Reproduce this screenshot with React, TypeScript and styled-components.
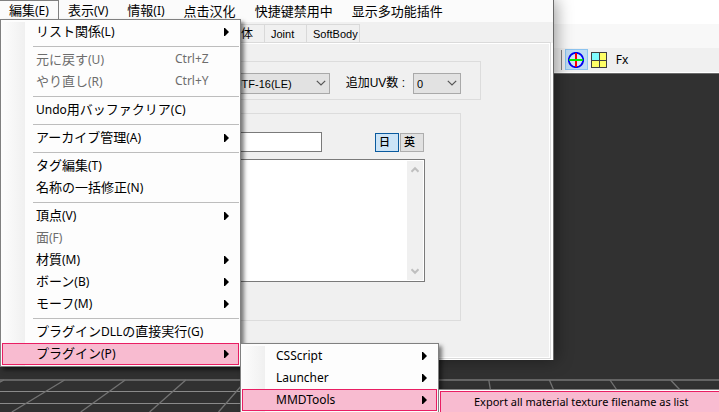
import React from "react";
import styled, { createGlobalStyle, css } from "styled-components";

const GlobalStyle = createGlobalStyle`
  * { box-sizing: border-box; }
  body {
    margin: 0;
    overflow: hidden;
    color: #000;
    font-family: "Noto Sans CJK JP", sans-serif;
    font-size: 13px;
    line-height: 20px;
  }
  button, select, input, textarea { font: inherit; color: inherit; margin: 0; }
  ul { list-style: none; margin: 0; padding: 0; }
`;

const Desktop = styled.div`
  position: relative;
  display: flex;
  flex-direction: column;
  height: 100vh;
  overflow: hidden;
  background: #313131;
`;

/* ---------- viewer window ---------- */

const ViewerTitle = styled.div`
  height: 24px;
  background: #fff;
`;

const ViewerMenu = styled.div`
  height: 24px;
  background: #f8f8f8;
`;

const ViewerTools = styled.div`
  display: flex;
  align-items: flex-start;
  height: 26px;
  padding: 1px 0 0 561px;
  background: #f0f0f0;
  border-bottom: 1px solid #6b6b6b;
  box-shadow: inset 0 -1px #fff;
`;

const ToolDivider = styled.span`
  width: 1px;
  height: 20px;
  margin: 1px 3px 0 0;
  background: #828282;
`;

const ToolButton = styled.button<{ $active?: boolean }>`
  display: flex;
  align-items: center;
  justify-content: center;
  width: 23px;
  height: 21px;
  padding: 0 1px 0 0;
  border: 1px solid ${(p) => (p.$active ? "#8cc3ef" : "transparent")};
  background: ${(p) => (p.$active ? "#bfdcf3" : "transparent")};
  font: 12px/20px "Noto Sans", sans-serif;
`;

const Viewport = styled.div`
  display: flex;
  flex: 1;
  flex-direction: column;
  justify-content: flex-end;
`;

const FloorSvg = styled.svg`
  display: block;
  width: 100%;
  height: 33px;
`;

/* ---------- editor window ---------- */

const Editor = styled.div`
  position: absolute;
  top: 0;
  left: 0;
  display: flex;
  flex-direction: column;
  width: 554px;
  height: 360px;
  background: #f0f0f0;
  border-right: 1px solid #6a6a6a;
  box-shadow: 2px 0 16px rgba(0, 0, 0, 0.4);
`;

const MenuBar = styled.nav`
  display: flex;
  height: 22px;
  background: #fbfbfb;
`;

const MenuTitle = styled.button<{ $open?: boolean }>`
  height: 20px;
  padding: 0 9px;
  border: 1px solid ${(p) => (p.$open ? "#808080" : "transparent")};
  border-left: 0;
  border-bottom: 0;
  background: none;
  line-height: 16px;
  white-space: nowrap;
`;

const TabStrip = styled.div`
  display: flex;
  justify-content: flex-end;
  width: 360px;
  margin-top: 2px;
`;

const formFont = css`
  font-family: "Liberation Sans", "Noto Sans CJK JP", sans-serif;
  font-size: 11px;
`;

const Tab = styled.button<{ $width: number }>`
  ${formFont}
  width: ${(p) => p.$width}px;
  height: 18px;
  padding: 0 0 0 6px;
  border: 1px solid #d9d9d9;
  border-bottom: 0;
  border-left: 0;
  background: #f0f0f0;
  line-height: 18px;
  text-align: left;
  white-space: nowrap;
`;

const KanjiTab = styled(Tab)`
  padding: 0 11px 0 0;
  font-size: 12px;
  text-align: right;
`;

const Panel = styled.form`
  flex: 1;
  margin: 0 2px 1px;
  padding: 18px 0 0 8px;
  border: 1px solid #dadada;
  box-shadow: inset -1px -1px #fff, inset 0 1px #fff, 2px 1px #fff;
`;

const SettingsGroup = styled.div`
  display: flex;
  align-items: center;
  justify-content: flex-end;
  width: 470px;
  height: 39px;
  padding: 5px 19px 0 0;
  border: 1px solid #dcdcdc;
`;

const FieldLabel = styled.label`
  ${formFont}
  margin: 0 8px 0 16px;
  font-size: 12px;
  white-space: nowrap;
`;

const ComboBox = styled.div<{ $wide?: boolean }>`
  ${formFont}
  display: grid;
  align-items: center;
  width: ${(p) => (p.$wide ? 100 : 48)}px;
  height: 21px;
  border: 1px solid #a9a9a9;
  background: #e2e2e2;

  > * { grid-area: 1 / 1; }
  > svg { justify-self: end; margin-right: 3px; pointer-events: none; }
`;

const Select = styled.select`
  width: 100%;
  height: 19px;
  padding: 0 0 0 3px;
  border: 0;
  background: none;
  appearance: none;
`;

const ModelGroup = styled.div`
  width: 450px;
  height: 208px;
  margin-top: 13px;
  padding: 18px 35px 0 12px;
  border: 1px solid #dcdcdc;
`;

const NameRow = styled.div`
  display: flex;
  align-items: flex-end;
  margin-bottom: 7px;
`;

const NameInput = styled.input`
  flex: 1;
  height: 20px;
  min-width: 0;
  margin-right: 53px;
  padding: 0 3px;
  border: 1px solid #7a7a7a;
  background: #fff;
`;

const LangButton = styled.button<{ $active?: boolean }>`
  width: 24px;
  height: 19px;
  margin-right: 1px;
  padding: 0 5px 2px 0;
  border: 1px solid ${(p) => (p.$active ? "#0a5a9e" : "#adadad")};
  background: ${(p) => (p.$active ? "#cce4f7" : "#e1e1e1")};
  font-size: 11px;
  font-weight: 500;
  line-height: 15px;
`;

const CommentBox = styled.div`
  display: flex;
  height: 123px;
  padding: 1px;
  border: 1px solid #7a7a7a;
  background: #fff;
`;

const CommentText = styled.textarea`
  flex: 1;
  min-width: 0;
  padding: 2px;
  border: 0;
  outline: 0;
  resize: none;
  background: #fff;
`;

const ScrollTrack = styled.div`
  display: flex;
  flex-direction: column;
  justify-content: space-between;
  width: 16px;
  background: #f0f0f0;
`;

const ScrollButton = styled.button`
  display: flex;
  align-items: center;
  justify-content: center;
  height: 17px;
  padding: 0;
  border: 0;
  background: none;
`;

/* ---------- drop-down menus ---------- */

const MenuPopup = styled.ul<{ $level: number }>`
  position: absolute;
  z-index: ${(p) => p.$level};
  top: ${(p) => (p.$level === 1 ? "19px" : "0")};
  left: ${(p) => (p.$level === 1 ? "0" : "calc(100% + 1px)")};
  width: ${(p) => [0, 241, 199, 300][p.$level]}px;
  padding: 1px;
  border: 1px solid #808080;
  background: linear-gradient(90deg, #fdfdfd, #f0f0f0) 0 2px / 24px 100% no-repeat #fdfdfd;
  box-shadow: 3px 3px 4px rgba(0, 0, 0, 0.5);
`;

const MenuRow = styled.li`
  position: relative;
`;

const MenuSeparator = styled.li`
  height: 6px;
  margin-left: 31px;
  background: linear-gradient(#bdbdbd, #bdbdbd) 0 3px / 100% 1px no-repeat;
`;

const MenuButton = styled.button<{ $selected?: boolean }>`
  display: flex;
  align-items: center;
  width: 100%;
  height: 22px;
  padding: 0 10px 0 34px;
  border: 0;
  background: none;
  text-align: left;
  white-space: nowrap;

  &:disabled { color: #6d6d6d; }

  ${(p) =>
    p.$selected &&
    css`
      background: #f8bbd0;
      box-shadow: inset 0 0 0 1px #e91e63;
    `}
`;

const Latin = styled.span<{ $small?: boolean }>`
  font-family: "Noto Sans", sans-serif;
  font-size: ${(p) => (p.$small ? 11 : 12)}px;
`;

const Caption = styled.span`
  flex: 1;
  padding-bottom: 2px;
`;

const Shortcut = styled(Latin)`
  width: 54px;
  padding-bottom: 2px;
`;

/* Latin runs are set in their own face, one size below the kanji and kana. */
const Mixed = ({ text, small }: { text: string; small?: boolean }) => (
  <>
    {text.split(/([\x20-\x7e]+)/).map((part, i) =>
      i % 2 ? (
        <Latin key={i} $small={small}>
          {part}
        </Latin>
      ) : (
        part
      )
    )}
  </>
);

const Arrow = () => (
  <svg width="5" height="8" viewBox="0 0 5 8" aria-hidden="true">
    <path d="M0 0H1L5 4L1 8H0Z" fill="#000" />
  </svg>
);

const Chevron = () => (
  <svg width="10" height="6" viewBox="0 0 10 6" fill="none" stroke="#555" aria-hidden="true">
    <path d="M.8 .8L5 5L9.2 .8" strokeWidth="1.2" />
  </svg>
);

const ScrollArrow = ({ down }: { down?: boolean }) => (
  <svg width="8" height="7" viewBox="0 0 8 7" fill="none" stroke="#bfbfbf" strokeWidth="2" aria-hidden="true">
    <path d={down ? "M.5 1.3L4 4.8L7.5 1.3" : "M.5 5.7L4 2.2L7.5 5.7"} />
  </svg>
);

const AxisIcon = () => (
  <svg width="16" height="16" viewBox="0 0 16 16" fill="none" aria-hidden="true">
    <circle cx="8" cy="8" r="7.2" fill="#cfe6fb" stroke="#0000f0" strokeWidth="1.8" />
    <path d="M8 1v14" stroke="#f00" strokeWidth="2" />
    <path d="M1 8h14" stroke="#00f000" strokeWidth="2" />
  </svg>
);

const PanesIcon = () => (
  <svg width="16" height="16" viewBox="0 0 16 16" aria-hidden="true">
    <path d="M0 0h16v16H0z" fill="#404040" />
    <path d="M1 1h7v7H1z" fill="#7ffcff" />
    <path d="M9 1h6v7H9zM1 9h7v6H1zM9 9h6v6H9z" fill="#ffff66" />
  </svg>
);

const FloorGrid = () => {
  const starts = Array.from({ length: 12 }, (_, i) => 4 + i * 60.6);
  return (
    <FloorSvg viewBox="0 0 719 33" preserveAspectRatio="none" stroke="#737373" aria-hidden="true">
      <path d="M0 1H719" strokeWidth="2" stroke="#646464" />
      <path d="M0 12.5H719M0 24.5H719" stroke="#8a8a8a" />
      {starts.map((x) => (
        <path key={x} d={`M${x} 1L${x + (x - 450) * 0.137} 33`} strokeWidth="1.3" />
      ))}
    </FloorSvg>
  );
};

type Entry = {
  text: string;
  keys?: string;
  disabled?: boolean;
  children?: Entry[];
  arrow?: boolean;
  selected?: boolean;
} | null;

const editMenu: Entry[] = [
  { text: "リスト関係(L)", arrow: true },
  null,
  { text: "元に戻す(U)", keys: "Ctrl+Z", disabled: true },
  { text: "やり直し(R)", keys: "Ctrl+Y", disabled: true },
  null,
  { text: "Undo用バッファクリア(C)" },
  null,
  { text: "アーカイブ管理(A)", arrow: true },
  null,
  { text: "タグ編集(T)" },
  { text: "名称の一括修正(N)" },
  null,
  { text: "頂点(V)", arrow: true },
  { text: "面(F)", disabled: true },
  { text: "材質(M)", arrow: true },
  { text: "ボーン(B)", arrow: true },
  { text: "モーフ(M)", arrow: true },
  null,
  { text: "プラグインDLLの直接実行(G)" },
  {
    text: "プラグイン(P)",
    arrow: true,
    selected: true,
    children: [
      { text: "CSScript", arrow: true },
      { text: "Launcher", arrow: true },
      {
        text: "MMDTools",
        arrow: true,
        selected: true,
        children: [{ text: "Export all material texture filename as list", selected: true }],
      },
    ],
  },
];

const Menu = ({ entries, level = 1 }: { entries: Entry[]; level?: number }) => (
  <MenuPopup $level={level} role="menu">
    {entries.map((entry, i) =>
      entry ? (
        <MenuRow key={i} role="none">
          <MenuButton type="button" role="menuitem" disabled={entry.disabled} $selected={entry.selected}>
            <Caption>
              <Mixed text={entry.text} small={level === 3} />
            </Caption>
            {entry.keys && <Shortcut>{entry.keys}</Shortcut>}
            {entry.arrow && <Arrow />}
          </MenuButton>
          {entry.children && <Menu entries={entry.children} level={level + 1} />}
        </MenuRow>
      ) : (
        <MenuSeparator key={i} role="separator" />
      )
    )}
  </MenuPopup>
);

const menuTitles = ["編集(E)", "表示(V)", "情報(I)", "点击汉化", "快捷键禁用中", "显示多功能插件"];

export default function App() {
  return (
    <>
      <GlobalStyle />
      <Desktop>
        <ViewerTitle />
        <ViewerMenu />
        <ViewerTools>
          <ToolDivider />
          <ToolButton $active aria-label="Axis">
            <AxisIcon />
          </ToolButton>
          <ToolButton aria-label="Panes">
            <PanesIcon />
          </ToolButton>
          <ToolButton>Fx</ToolButton>
        </ViewerTools>
        <Viewport>
          <FloorGrid />
        </Viewport>

        <Editor>
          <MenuBar>
            {menuTitles.map((title, i) => (
              <MenuTitle key={title} type="button" $open={i === 0} lang={i > 2 ? "zh-CN" : "ja"}>
                <Mixed text={title} />
              </MenuTitle>
            ))}
          </MenuBar>
          <TabStrip role="tablist">
            <KanjiTab type="button" role="tab" $width={42}>
              剛体
            </KanjiTab>
            <Tab type="button" role="tab" $width={42}>
              Joint
            </Tab>
            <Tab type="button" role="tab" $width={53}>
              SoftBody
            </Tab>
          </TabStrip>
          <Panel>
            <SettingsGroup>
              <ComboBox $wide>
                <Select aria-label="Encoding">
                  <option>UTF-16(LE)</option>
                </Select>
                <Chevron />
              </ComboBox>
              <FieldLabel htmlFor="uv">追加UV数 :</FieldLabel>
              <ComboBox>
                <Select id="uv">
                  <option>0</option>
                </Select>
                <Chevron />
              </ComboBox>
            </SettingsGroup>
            <ModelGroup>
              <NameRow>
                <NameInput aria-label="Name" />
                <LangButton type="button" $active>
                  日
                </LangButton>
                <LangButton type="button">英</LangButton>
              </NameRow>
              <CommentBox>
                <CommentText aria-label="Comment" />
                <ScrollTrack>
                  <ScrollButton type="button" aria-label="Up">
                    <ScrollArrow />
                  </ScrollButton>
                  <ScrollButton type="button" aria-label="Down">
                    <ScrollArrow down />
                  </ScrollButton>
                </ScrollTrack>
              </CommentBox>
            </ModelGroup>
          </Panel>
        </Editor>

        <Menu entries={editMenu} />
      </Desktop>
    </>
  );
}
